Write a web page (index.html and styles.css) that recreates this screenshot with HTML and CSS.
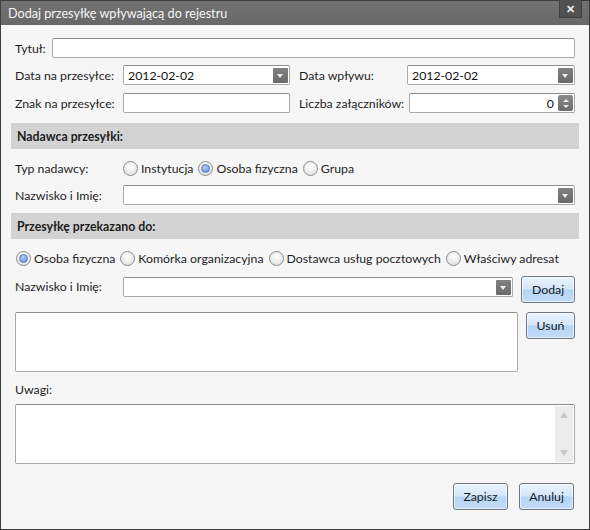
FILE: index.html
```html
<!DOCTYPE html>
<html>
<head>
<meta charset="utf-8">
<link rel="stylesheet" href="styles.css">
</head>
<body>
<div class="window">
  <div class="titlebar">
    <span class="title">Dodaj przesyłkę wpływającą do rejestru</span>
    <span class="close">✕</span>
  </div>
  <div class="content">
    <div class="row r1">
      <span class="lbl short">Tytuł:</span>
      <div class="input grow"></div>
    </div>
    <div class="grid r2">
      <span class="lbl">Data na przesyłce:</span>
      <div class="input combo"><span class="val">2012-02-02</span><span class="arrow"></span></div>
      <span class="lbl">Data wpływu:</span>
      <div class="input combo"><span class="val">2012-02-02</span><span class="arrow"></span></div>
    </div>
    <div class="grid r3">
      <span class="lbl">Znak na przesyłce:</span>
      <div class="input"></div>
      <span class="lbl">Liczba załączników:</span>
      <div class="input spin"><span class="num">0</span><span class="spinbtn"><span class="up"></span><span class="dn"></span></span></div>
    </div>
    <div class="section s1">Nadawca przesyłki:</div>
    <div class="row r4">
      <span class="lbl">Typ nadawcy:</span>
      <span class="radio"><span class="dot"></span>Instytucja</span>
      <span class="radio on"><span class="dot"></span>Osoba fizyczna</span>
      <span class="radio"><span class="dot"></span>Grupa</span>
    </div>
    <div class="row r5">
      <span class="lbl">Nazwisko i Imię:</span>
      <div class="input combo grow"><span class="val"></span><span class="arrow"></span></div>
    </div>
    <div class="section s2">Przesyłkę przekazano do:</div>
    <div class="row r6">
      <span class="radio on"><span class="dot"></span>Osoba fizyczna</span>
      <span class="radio"><span class="dot"></span>Komórka organizacyjna</span>
      <span class="radio"><span class="dot"></span>Dostawca usług pocztowych</span>
      <span class="radio"><span class="dot"></span>Właściwy adresat</span>
    </div>
    <div class="row r7">
      <span class="lbl">Nazwisko i Imię:</span>
      <div class="input combo c7"><span class="val"></span><span class="arrow"></span></div>
      <button class="btn dodaj">Dodaj</button>
    </div>
    <div class="row r8">
      <div class="listbox"></div>
      <button class="btn usun">Usuń</button>
    </div>
    <div class="uwagi">Uwagi:</div>
    <div class="textarea"><div class="scroll"><span class="sup"></span><span class="sdn"></span></div></div>
    <div class="footer">
      <button class="btn">Zapisz</button>
      <button class="btn">Anuluj</button>
    </div>
  </div>
</div>
</body>
</html>
```
FILE: styles.css
```css
* { box-sizing: border-box; }
html, body { margin: 0; padding: 0; background: #f6f6f6; }
body { font-family: Lato, "Open Sans", sans-serif; font-size: 12.3px; color: #1e1e1e; white-space: nowrap; }
.window {
  width: 590px; height: 530px;
  border: 1px solid #3d3d3d;
  background: #f6f6f6;
  display: flex; flex-direction: column;
}
.titlebar {
  height: 24px; flex: none;
  background: linear-gradient(#727272, #686868);
  display: flex; align-items: center; justify-content: space-between;
  padding-left: 7px;
}
.title { color: #f4f4f4; font-size: 12.6px; }
.close {
  width: 23px; height: 18px;
  margin-right: 7px; align-self: flex-start; margin-top: -1px;
  background: #515151; border: 1px solid #3e3e3e; border-top: none;
  color: #eee; font-size: 11px; font-weight: bold;
  display: flex; align-items: center; justify-content: center;
}
.content { padding: 0 14px; display: flex; flex-direction: column; }
.row { display: flex; align-items: center; }
.grid { display: grid; grid-template-columns: 108px 167px 117px 168px; align-items: center; }
.grid .lbl:nth-child(3) { padding-left: 9px; width: auto; }
.lbl { width: 108px; flex: none; }
.lbl.short { width: 37px; }
.input {
  height: 20px; background: #fff;
  border: 1px solid #a9a9a9; border-radius: 2px;
  border-top-color: #8e8e8e;
  display: flex; align-items: center;
}
.grow { flex: 1; }
.r1 { margin-top: 13px; }
.r2 { margin-top: 7px; }
.r3 { margin-top: 8px; }
.combo { padding-left: 4px; justify-content: space-between; }
.combo .val { color: #111; }
.arrow {
  width: 15px; height: 15px; margin-right: 1px;
  background: linear-gradient(#808080, #6a6a6a);
  border-radius: 1px; position: relative;
}
.arrow::after {
  content: ""; position: absolute; left: 4px; top: 6px;
  border-left: 3.5px solid transparent; border-right: 3.5px solid transparent;
  border-top: 4px solid #f0f0f0;
}
.spin { justify-content: flex-end; margin-left: 2px; }
.num { margin-right: 4px; color: #111; }
.spinbtn {
  width: 15px; height: 16px; margin-right: 1px;
  background: linear-gradient(#8a8a8a, #6c6c6c);
  border-radius: 2px; display: flex; flex-direction: column; align-items: center; justify-content: space-around;
  padding: 2px 0;
}
.spinbtn .up { border-left: 3px solid transparent; border-right: 3px solid transparent; border-bottom: 3px solid #eee; }
.spinbtn .dn { border-left: 3px solid transparent; border-right: 3px solid transparent; border-top: 3px solid #eee; }
.section {
  margin: 0 -4px; height: 26px; background: #d3d3d3;
  font-weight: bold; padding-left: 6px; display: flex; align-items: center;
}
.s1 { margin-top: 10px; }
.s2 { margin-top: 8px; }
.r4 { margin-top: 9px; height: 20px; }
.r5 { margin-top: 7px; }
.radio { display: flex; align-items: center; margin-right: 5px; }
.dot {
  width: 15px; height: 15px; border-radius: 50%;
  border: 1px solid #8a8a8a;
  background: radial-gradient(circle at 50% 35%, #ffffff, #dcdcdc);
  margin-right: 3px; position: relative; flex: none;
}
.radio.on .dot::after {
  content: ""; position: absolute; left: 2px; top: 2px; width: 9px; height: 9px; border-radius: 50%;
  background: radial-gradient(circle at 45% 35%, #b7d3fa, #4f7fd6);
  border: 1px solid #5d83c4; box-sizing: border-box;
}
.r6 { margin-top: 9px; height: 20px; margin-left: 1px; }
.r6 .radio { margin-right: 5px; }
.r7 { margin-top: 8px; align-items: flex-start; }
.r7 .lbl { height: 20px; display: flex; align-items: center; }
.c7 { flex: 1; margin-top: 1px; }
.btn {
  font-family: inherit; font-size: 12.3px; color: #1a1a1a;
  height: 27px; padding: 0 4px;
  border: 1px solid #6f7783; border-radius: 3px;
  background: linear-gradient(#e9f3fd 0%, #d4e7fb 48%, #b5d5f6 52%, #c2dcf7 100%);
  box-shadow: inset 0 0 0 1px rgba(255,255,255,0.6);
}
.dodaj { width: 54px; margin-left: 8px; }
.r8 { margin-top: 9px; align-items: flex-start; }
.listbox { flex: 1; height: 60px; background: #fff; border: 1px solid #a9a9a9; border-top-color: #8e8e8e; border-radius: 2px; }
.usun { width: 49px; margin-left: 8px; }
.uwagi { margin-top: 10px; height: 16px; line-height: 16px; }
.textarea {
  margin-top: 6px; height: 60px; background: #fff;
  border: 1px solid #a9a9a9; border-top-color: #8a8a8a; border-radius: 2px;
  display: flex; justify-content: flex-end; padding: 1px;
}
.scroll { width: 18px; background: #ececec; display: flex; flex-direction: column; justify-content: space-between; align-items: center; padding: 6px 0; }
.sup { border-left: 4px solid transparent; border-right: 4px solid transparent; border-bottom: 6px solid #c8c8c8; }
.sdn { border-left: 4px solid transparent; border-right: 4px solid transparent; border-top: 6px solid #c8c8c8; }
.footer { margin-top: 19px; display: flex; justify-content: flex-end; gap: 11px; padding-right: 1px; }
.footer .btn { width: 55px; }
```
